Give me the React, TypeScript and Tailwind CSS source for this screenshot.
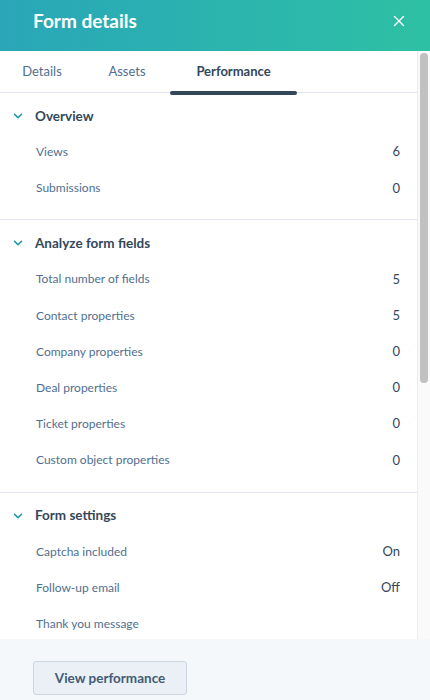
import { ChevronDown, X } from "lucide-react";

const overview = [
  { label: "Views", value: "6" },
  { label: "Submissions", value: "0" },
];

const fields = [
  { label: "Total number of fields", value: "5" },
  { label: "Contact properties", value: "5" },
  { label: "Company properties", value: "0" },
  { label: "Deal properties", value: "0" },
  { label: "Ticket properties", value: "0" },
  { label: "Custom object properties", value: "0" },
];

const settings = [
  { label: "Captcha included", value: "On" },
  { label: "Follow-up email", value: "Off" },
  { label: "Thank you message", value: "" },
];

function Section({ title, rows, last }: { title: string; rows: { label: string; value: string }[]; last?: boolean }) {
  return (
    <section className={`pt-[5px] pb-[13px] ${last ? "" : "border-b border-[#dfe3eb]"}`}>
      <div className="flex h-[36px] items-center">
        <ChevronDown className="ml-[11px] h-[14px] w-[14px] text-[#0091ae]" strokeWidth={2.2} />
        <h2 className="ml-[10px] text-[13.5px] font-bold text-[#33475b]">{title}</h2>
      </div>
      {rows.map((r) => (
        <div key={r.label} className="flex h-[36.2px] items-center justify-between pl-[36px] pr-[17px]">
          <span className="text-[12px] text-[#516f90]">{r.label}</span>
          <span className="text-[13px] text-[#33475b]">{r.value}</span>
        </div>
      ))}
    </section>
  );
}

export default function App() {
  return (
    <div className="flex h-[700px] w-[430px] flex-col overflow-hidden bg-white" style={{ fontFamily: "Lato, 'Noto Sans', sans-serif" }}>
      {/* Header */}
      <header className="flex h-[51px] shrink-0 items-start justify-between bg-gradient-to-r from-[#2aa6b8] to-[#2ec0a4] pt-[9px] pl-[33px] pr-[22px]">
        <h1 className="text-[19px] font-bold leading-[24px] text-white">Form details</h1>
        <X className="mt-[3px] h-[18px] w-[18px] text-white" strokeWidth={1.8} />
      </header>

      <div className="flex min-h-0 flex-1">
        <div className="min-w-0 flex-1 overflow-hidden">
          {/* Tabs */}
          <nav className="flex h-[42px] items-end border-b border-[#dfe3eb]">
            <div className="flex h-full w-[84px] items-center justify-center text-[13px] text-[#516f90]">Details</div>
            <div className="flex h-full w-[86px] items-center justify-center text-[13px] text-[#516f90]">Assets</div>
            <div className="relative flex h-full w-[127px] items-center justify-center text-[13px] font-bold text-[#33475b]">
              Performance
              <span className="absolute -bottom-[3px] left-0 right-0 h-[4px] rounded-full bg-[#33475b]" />
            </div>
          </nav>

          <Section title="Overview" rows={overview} />
          <Section title="Analyze form fields" rows={fields} />
          <Section title="Form settings" rows={settings} last />
        </div>

        {/* Scrollbar */}
        <div className="w-[13px] shrink-0 border-l border-[#ececec] bg-[#fafafa] pt-[2px]">
          <div className="mx-auto h-[330px] w-[8px] rounded-full bg-[#c1c1c1]" />
        </div>
      </div>

      {/* Footer */}
      <footer className="flex h-[61px] shrink-0 items-start bg-[#f5f8fa] pt-[22px] pl-[33px]">
        <button className="h-[34px] w-[154px] rounded-[3px] border border-[#cbd6e2] bg-[#eaf0f6] text-[13.5px] font-bold text-[#425b76]">
          View performance
        </button>
      </footer>
    </div>
  );
}
